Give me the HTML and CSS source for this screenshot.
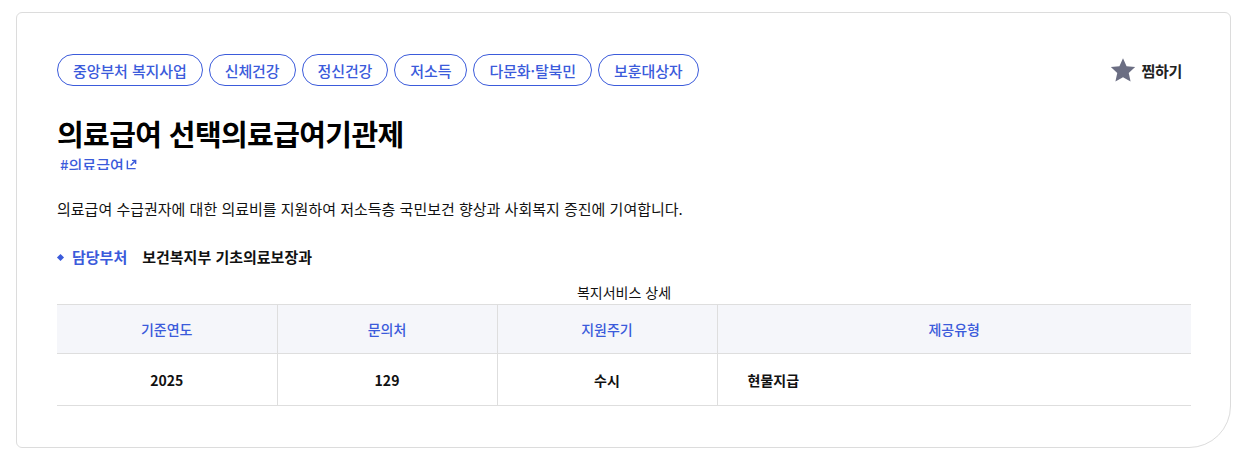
FILE: index.html
```html
<!DOCTYPE html>
<html lang="ko">
<head>
<meta charset="utf-8">
<link rel="stylesheet" href="styles.css">
</head>
<body>
<div class="card">
  <div class="top">
    <ul class="tags">
      <li class="tag">중앙부처 복지사업</li>
      <li class="tag">신체건강</li>
      <li class="tag">정신건강</li>
      <li class="tag">저소득</li>
      <li class="tag">다문화·탈북민</li>
      <li class="tag">보훈대상자</li>
    </ul>
    <button class="fav">
      <svg class="star" viewBox="0 0 24 24" width="26" height="26"><path d="M12 1.2l3.3 7.3 7.9.8-5.9 5.4 1.7 7.9L12 18.6l-7 4 1.7-7.9L.8 9.3l7.9-.8z" fill="#6b6e83"/></svg>
      <span>찜하기</span>
    </button>
  </div>
  <h1 class="title">의료급여 선택의료급여기관제</h1>
  <div class="hash"><span>#의료급여</span><svg class="ext" viewBox="0 0 12 12" width="11" height="11"><path d="M1.5 1.5v9h9" fill="none" stroke="#3b5bdb" stroke-width="1.6"/><path d="M5 7l5.5-5.5M6.5 1.5h4v4" fill="none" stroke="#3b5bdb" stroke-width="1.6"/></svg></div>
  <p class="desc">의료급여 수급권자에 대한 의료비를 지원하여 저소득층 국민보건 향상과 사회복지 증진에 기여합니다.</p>
  <div class="dept"><span class="dept-label">담당부처</span><span class="dept-name">보건복지부 기초의료보장과</span></div>
  <table class="detail">
    <caption>복지서비스 상세</caption>
    <thead>
      <tr><th>기준연도</th><th>문의처</th><th>지원주기</th><th class="wide">제공유형</th></tr>
    </thead>
    <tbody>
      <tr><td>2025</td><td>129</td><td>수시</td><td class="left">현물지급</td></tr>
    </tbody>
  </table>
</div>
</body>
</html>
```
FILE: styles.css
```css
* { box-sizing: border-box; }
html, body { margin: 0; padding: 0; background: #fff; }
body {
  font-family: "Noto Sans CJK KR", "Noto Sans", sans-serif;
  color: #111;
}
.card {
  margin: 12px 18px 0 16px;
  height: 436px;
  border: 1px solid #dcdcdc;
  border-radius: 6px 6px 42px 6px;
  padding: 41px 39px 0 40px;
}
.top {
  display: flex;
  justify-content: space-between;
  align-items: center;
}
.tags {
  list-style: none;
  margin: 0;
  padding: 0;
  display: flex;
  gap: 6px;
}
.tag {
  height: 32px;
  padding: 0 15px;
  border: 1px solid #3b5bdb;
  border-radius: 16px;
  color: #3b5bdb;
  font-size: 15px;
  font-weight: 500;
  letter-spacing: -0.1px;
  display: flex;
  align-items: center;
}
.fav {
  display: flex;
  align-items: center;
  gap: 5px;
  background: none;
  border: 0;
  padding: 0;
  margin-right: 9px;
  font-family: inherit;
  font-size: 15px;
  font-weight: 700;
  color: #222;
  letter-spacing: -0.3px;
}
.title {
  margin: 27px 0 0;
  font-size: 29px;
  font-weight: 700;
  letter-spacing: -0.6px;
  line-height: 40px;
  color: #000;
}
.hash {
  height: 13px;
  overflow: hidden;
  margin-top: 4px;
  padding-left: 3px;
  display: flex;
  align-items: flex-start;
  gap: 2px;
  color: #3b5bdb;
  font-size: 15px;
  font-weight: 500;
  line-height: 18px;
}
.hash span { margin-top: -1px; }
.ext { margin-top: 2px; }
.desc {
  margin: 28px 0 0;
  font-size: 15px;
  line-height: 22px;
  letter-spacing: 0;
  color: #111;
}
.dept {
  margin-top: 26px;
  display: flex;
  align-items: center;
  font-size: 15px;
  font-weight: 700;
  line-height: 22px;
  letter-spacing: 0;
}
.dept-label {
  color: #3b5bdb;
  position: relative;
  padding-left: 15px;
  margin-right: 15px;
}
.dept-label::before {
  content: "";
  position: absolute;
  left: 1px;
  top: 9px;
  width: 5px;
  height: 5px;
  background: #3b5bdb;
  transform: rotate(45deg);
}
.dept-name { color: #111; }
.detail {
  margin-top: 13px;
  width: 100%;
  border-collapse: collapse;
  table-layout: fixed;
  font-size: 14px;
}
.detail caption {
  font-size: 14px;
  line-height: 22px;
  padding-bottom: 1px;
  letter-spacing: 0;
  color: #111;
}
.detail th, .detail td {
  border-top: 1px solid #dedede;
  border-bottom: 1px solid #dedede;
  border-left: 1px solid #dedede;
  text-align: center;
}
.detail th:first-child, .detail td:first-child { border-left: 0; }
.detail th {
  width: 220px;
  height: 49px;
  background: #f5f6fa;
  color: #3b5bdb;
  font-weight: 500;
}
.detail th.wide { width: auto; }
.detail td {
  height: 52px;
  font-weight: 700;
  color: #111;
}
.detail td.left { text-align: left; padding-left: 30px; }
```
